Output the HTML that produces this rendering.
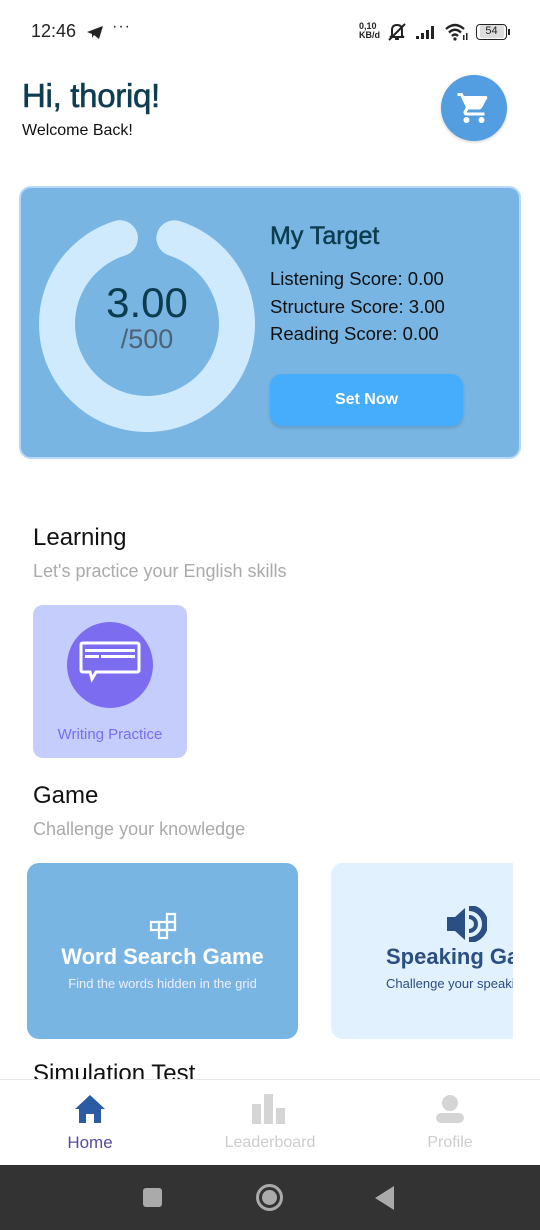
<!DOCTYPE html>
<html><head><meta charset="utf-8">
<style>
*{margin:0;padding:0;box-sizing:border-box}
body{width:540px;height:1230px;overflow:hidden;background:#fff;font-family:"Liberation Sans",sans-serif;position:relative}
.abs{position:absolute}
</style></head><body>
<!-- status bar -->
<div class="abs" style="left:31px;top:21px;font-size:18px;color:#222">12:46</div>
<svg class="abs" style="left:86px;top:25px" width="18" height="15" viewBox="0 0 18 15"><path d="M1 7 L17 1 L13 14 L8 10 L6 13 L6 9 Z" fill="#222"/></svg>
<div class="abs" style="left:112px;top:18px;font-size:16px;color:#222;letter-spacing:1px">···</div>
<div class="abs" style="left:359px;top:22px;font-size:9px;line-height:9px;font-weight:bold;color:#222">0,10<br>KB/d</div>
<svg class="abs" style="left:386px;top:22px" width="22" height="20" viewBox="0 0 22 20"><path d="M6 14 L6 8 Q6 3 11 3 Q16 3 16 8 L16 14 L18 15 L4 15 Z" fill="none" stroke="#222" stroke-width="2"/><path d="M3 18 L19 2" stroke="#222" stroke-width="2"/><path d="M9 17 h4" stroke="#222" stroke-width="2"/></svg>
<svg class="abs" style="left:416px;top:25px" width="22" height="15"><rect x="0" y="11" width="3" height="3" fill="#222"/><rect x="5" y="8" width="3" height="6" fill="#222"/><rect x="10" y="5" width="3" height="9" fill="#222"/><rect x="15" y="1" width="3" height="13" fill="#222"/></svg>
<svg class="abs" style="left:444px;top:22px" width="24" height="20" viewBox="0 0 24 20"><path d="M2 7 Q11 -1 20 7" fill="none" stroke="#222" stroke-width="2.4"/><path d="M5 10.5 Q11 5 17 10.5" fill="none" stroke="#222" stroke-width="2.4"/><path d="M8 14 Q11 11 14 14" fill="none" stroke="#222" stroke-width="2.4"/><circle cx="11" cy="17" r="1.6" fill="#222"/><rect x="19" y="13" width="1.5" height="5" fill="#222"/><rect x="22" y="11" width="1.5" height="7" fill="#222"/></svg>
<div class="abs" style="left:476px;top:24px;width:31px;height:16px;border:1.5px solid #222;border-radius:4px;font-size:11px;line-height:13px;text-align:center;color:#222"><span style="display:inline-block;background:#ddd;width:24px;border-radius:2px">54</span></div>
<div class="abs" style="left:508px;top:29px;width:2px;height:6px;background:#222"></div>

<!-- header -->
<div class="abs" style="left:22px;top:77px;font-size:33px;color:#0e3d52;letter-spacing:-0.3px;-webkit-text-stroke:0.6px #0e3d52">Hi, thoriq!</div>
<div class="abs" style="left:22px;top:122px;font-size:16px;color:#111">Welcome Back!</div>
<div class="abs" style="left:441px;top:75px;width:66px;height:66px;border-radius:50%;background:#539ee0;box-shadow:0 1px 3px rgba(0,0,0,.2)"></div>
<svg class="abs" style="left:456px;top:90px" width="36" height="36" viewBox="0 0 24 24"><path fill="#fff" d="M7 18c-1.1 0-2 .9-2 2s.9 2 2 2 2-.9 2-2-.9-2-2-2zM1 2v2h2l3.6 7.6-1.4 2.4c-.1.3-.2.6-.2 1 0 1.1.9 2 2 2h12v-2H7.4c-.1 0-.2-.1-.2-.2v-.1l.9-1.7h7.4c.8 0 1.4-.4 1.7-1l3.6-6.5c.1-.2.1-.3.1-.5 0-.6-.4-1-1-1H5.2l-.9-2H1zm16 16c-1.1 0-2 .9-2 2s.9 2 2 2 2-.9 2-2-.9-2-2-2z"/></svg>

<!-- target card -->
<div class="abs" style="left:19px;top:186px;width:502px;height:273px;background:#78b5e3;border:2px solid #b8d7fb;border-radius:12px"></div>
<svg class="abs" style="left:0;top:180px" width="300" height="290"><circle cx="147" cy="144" r="90" fill="none" stroke="#cfe9fd" stroke-width="36" stroke-linecap="round" stroke-dasharray="510 55.5" transform="rotate(-72.3 147 144)"/></svg>
<div class="abs" style="left:47px;top:279px;width:200px;text-align:center;font-size:42px;color:#0c3d4f">3.00</div>
<div class="abs" style="left:47px;top:324px;width:200px;text-align:center;font-size:27px;color:#4e6275">/500</div>
<div class="abs" style="left:270px;top:222px;font-size:25px;color:#0c3d4f;-webkit-text-stroke:0.5px #0c3d4f">My Target</div>
<div class="abs" style="left:270px;top:265px;font-size:18.5px;color:#111;line-height:27.5px">Listening Score: 0.00<br>Structure Score: 3.00<br>Reading Score: 0.00</div>
<div class="abs" style="left:270px;top:374px;width:193px;height:52px;background:#46acfc;border-radius:12px;box-shadow:0 2px 3px rgba(0,0,0,.15);color:#fff;font-size:16px;font-weight:bold;text-align:center;line-height:52px">Set Now</div>

<!-- learning -->
<div class="abs" style="left:33px;top:524px;font-size:24px;color:#111">Learning</div>
<div class="abs" style="left:33px;top:561px;font-size:18px;color:#aaa">Let's practice your English skills</div>
<div class="abs" style="left:33px;top:605px;width:154px;height:153px;background:#c4cdfb;border-radius:10px"></div>
<div class="abs" style="left:67px;top:622px;width:86px;height:86px;border-radius:50%;background:#7b6cf0"></div>
<svg class="abs" style="left:79px;top:641px" width="62" height="46" viewBox="0 0 62 46"><path d="M4 2 H58 Q60 2 60 4 V29 Q60 31 58 31 H17 L13 38 L11 31 H4 Q2 31 2 29 V4 Q2 2 4 2 Z" fill="none" stroke="#fff" stroke-width="3"/><rect x="6" y="8" width="50" height="3" fill="#fff"/><rect x="6" y="14" width="14" height="3" fill="#fff"/><rect x="22" y="14" width="34" height="3" fill="#fff"/></svg>
<div class="abs" style="left:33px;top:726px;width:154px;text-align:center;font-size:15px;color:#7b6cf0">Writing Practice</div>

<!-- game -->
<div class="abs" style="left:33px;top:782px;font-size:24px;color:#111">Game</div>
<div class="abs" style="left:33px;top:819px;font-size:18px;color:#aaa">Challenge your knowledge</div>
<div class="abs" style="left:27px;top:863px;width:271px;height:176px;background:#78b5e3;border-radius:12px"></div>
<svg class="abs" style="left:148px;top:912px" width="30" height="28" viewBox="0 0 30 28"><g fill="none" stroke="#fff" stroke-width="2.2"><rect x="19" y="2" width="8" height="8"/><rect x="3" y="10" width="8" height="8"/><rect x="11" y="10" width="8" height="8"/><rect x="19" y="10" width="8" height="8"/><rect x="11" y="18" width="8" height="8"/></g></svg>
<div class="abs" style="left:27px;top:944px;width:271px;text-align:center;font-size:22px;color:#fff;font-weight:bold">Word Search Game</div>
<div class="abs" style="left:27px;top:976px;width:271px;text-align:center;font-size:13px;color:#eef">Find the words hidden in the grid</div>
<div class="abs" style="left:331px;top:863px;width:182px;height:176px;background:#e1f1fd;border-radius:12px 0 0 12px;overflow:hidden">
<svg class="abs" style="left:114px;top:43px" width="42" height="36" viewBox="0 0 42 36"><path d="M2 11 H10 L20 2 V34 L10 25 H2 Z" fill="#2b4e83"/><path d="M24 2 A16 16 0 0 1 24 34" fill="none" stroke="#2b4e83" stroke-width="6"/><path d="M24 11 A7 7 0 0 1 24 25" fill="none" stroke="#2b4e83" stroke-width="4"/></svg>
<div class="abs" style="left:55px;top:81px;white-space:nowrap;font-size:22px;color:#2b4e83;font-weight:bold">Speaking Game</div>
<div class="abs" style="left:55px;top:113px;white-space:nowrap;font-size:13px;color:#2b4e83">Challenge your speaking</div>
</div>

<div class="abs" style="left:33px;top:1060px;font-size:24px;color:#111">Simulation Test</div>

<!-- bottom nav -->
<div class="abs" style="left:0;top:1079px;width:540px;height:86px;background:#fff;border-top:1px solid #e6e6e6"></div>
<svg class="abs" style="left:74px;top:1094px" width="32" height="30" viewBox="0 0 32 30"><path d="M16 1 L31 15 H27 V29 H20 V20 H12 V29 H5 V15 H1 Z" fill="#2b5ba5"/></svg>
<div class="abs" style="left:30px;top:1133px;width:120px;text-align:center;font-size:17px;color:#5a4aa0">Home</div>
<svg class="abs" style="left:252px;top:1094px" width="36" height="30"><rect x="0" y="10" width="9" height="20" fill="#d5d5d5"/><rect x="12" y="0" width="9" height="30" fill="#d5d5d5"/><rect x="24" y="14" width="9" height="16" fill="#d5d5d5"/></svg>
<div class="abs" style="left:210px;top:1134px;width:120px;text-align:center;font-size:16px;color:#ccc">Leaderboard</div>
<svg class="abs" style="left:435px;top:1094px" width="30" height="30"><circle cx="15" cy="9" r="8" fill="#d5d5d5"/><rect x="1" y="19" width="28" height="10" rx="5" fill="#d5d5d5"/></svg>
<div class="abs" style="left:390px;top:1134px;width:120px;text-align:center;font-size:16px;color:#ccc">Profile</div>

<!-- system nav -->
<div class="abs" style="left:0;top:1165px;width:540px;height:65px;background:#333"></div>
<div class="abs" style="left:143px;top:1188px;width:19px;height:19px;background:#aaa;border-radius:3px"></div>
<div class="abs" style="left:256px;top:1184px;width:27px;height:27px;border:3px solid #aaa;border-radius:50%"></div>
<div class="abs" style="left:262px;top:1190px;width:15px;height:15px;background:#aaa;border-radius:50%"></div>
<svg class="abs" style="left:375px;top:1186px" width="20" height="24"><path d="M19 0 V24 L0 12 Z" fill="#aaa"/></svg>
</body></html>
